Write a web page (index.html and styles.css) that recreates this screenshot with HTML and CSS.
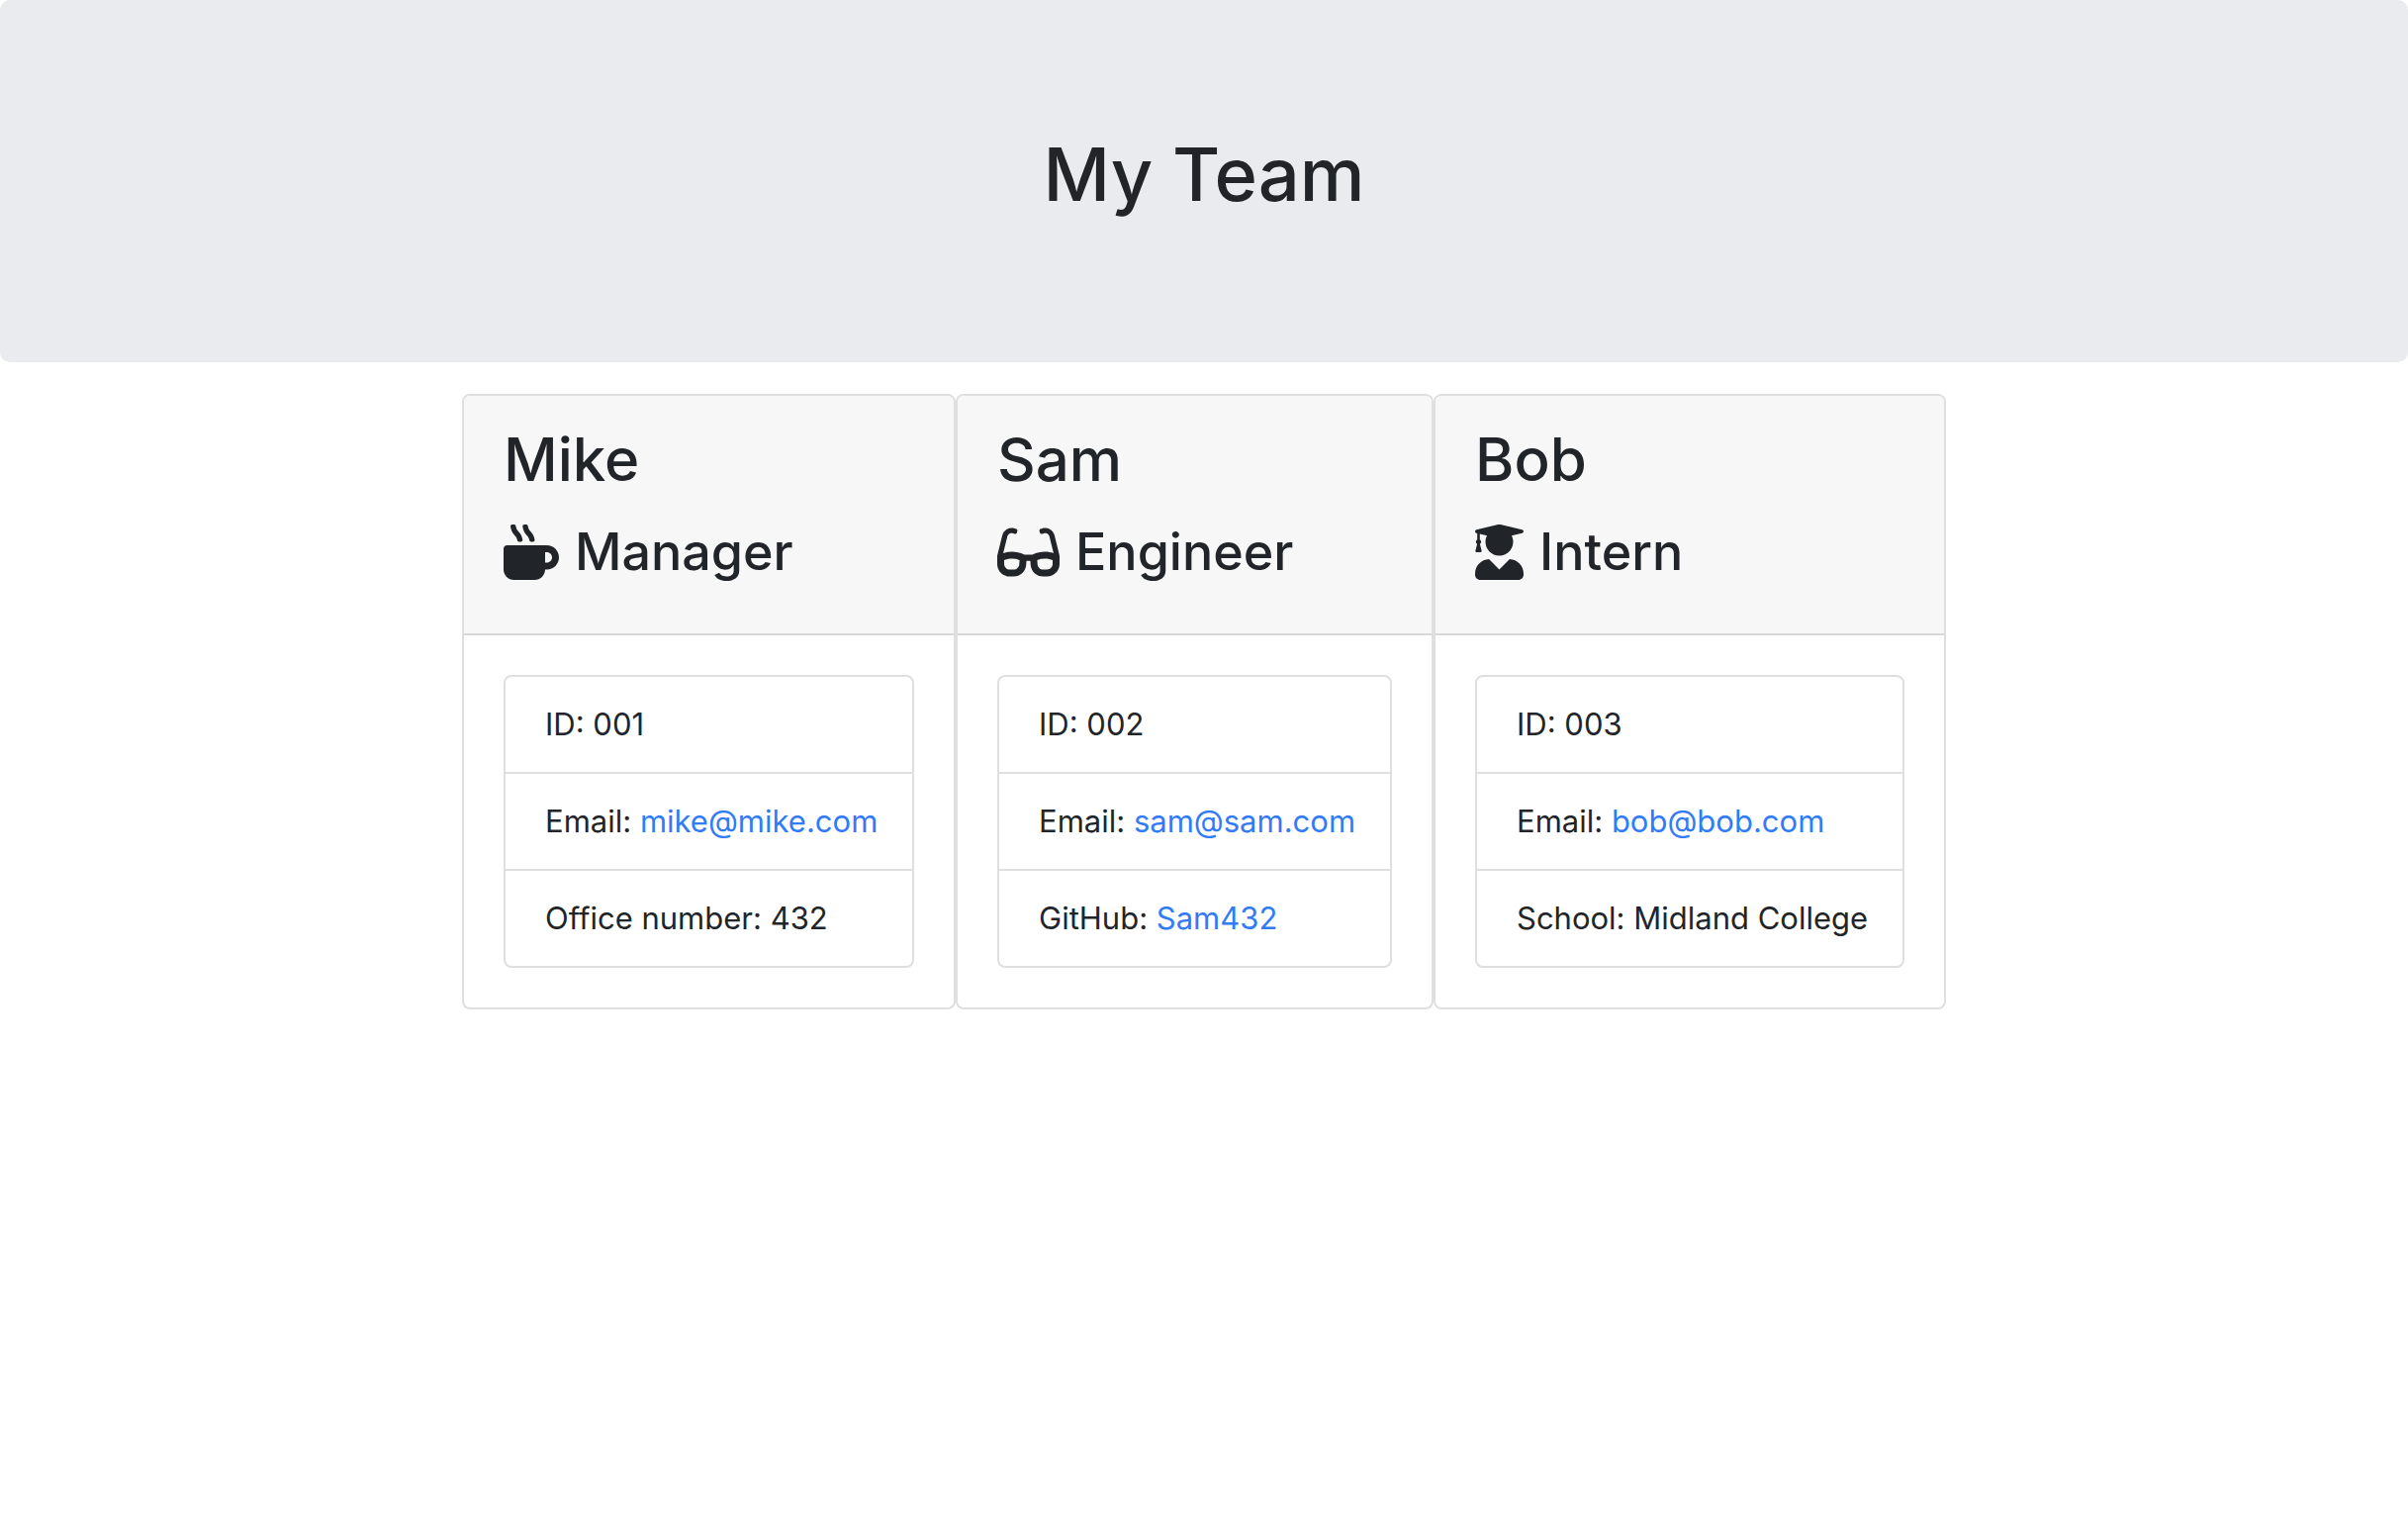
FILE: index.html
```html
<!DOCTYPE html>
<html lang="en">
<head>
  <meta charset="utf-8">
  <meta name="viewport" content="width=device-width, initial-scale=1">
  <title>My Team</title>
  <link rel="stylesheet" href="styles.css">
</head>
<body>
  <header class="banner">
    <h1 class="banner-title">My Team</h1>
  </header>
  <main class="team">
    <article class="card">
      <div class="card-header">
        <h2 class="name">Mike</h2>
        <h3 class="role">
          <svg class="icon" viewBox="0 0 512 512" aria-hidden="true"><path d="M127.1 146.5c1.3 7.7 8 13.5 16 13.5h16.5c9.8 0 17.6-8.5 16.3-18-3.8-28.2-16.4-54.2-36.6-74.7-14.4-14.7-23.6-33.3-26.4-53.5C111.8 5.9 105 0 96.8 0H80.4C70.6 0 63 8.5 64.1 18c3.9 31.9 18 61.3 40.6 84.4 12 12.2 19.7 27.5 22.4 44.1zm112 0c1.3 7.7 8 13.5 16 13.5h16.5c9.8 0 17.6-8.5 16.3-18-3.8-28.2-16.4-54.2-36.6-74.7-14.4-14.7-23.6-33.3-26.4-53.5C223.8 5.9 217 0 208.8 0h-16.4c-9.8 0-17.5 8.5-16.3 18 3.9 31.9 18 61.3 40.6 84.4 12 12.2 19.7 27.5 22.4 44.1zM400 192H32c-17.7 0-32 14.3-32 32v192c0 53 43 96 96 96h192c53 0 96-43 96-96h16c61.8 0 112-50.2 112-112s-50.2-112-112-112zm0 160h-16v-96h16c26.5 0 48 21.5 48 48s-21.5 48-48 48z"/></svg>
          <span>Manager</span>
        </h3>
      </div>
      <div class="card-body">
        <ul class="details">
          <li>ID: 001</li>
          <li>Email: <a href="mailto:mike@mike.com">mike@mike.com</a></li>
          <li>Office number: 432</li>
        </ul>
      </div>
    </article>
    <article class="card">
      <div class="card-header">
        <h2 class="name">Sam</h2>
        <h3 class="role">
          <svg class="icon" viewBox="0 0 576 512" aria-hidden="true"><path d="M574.1 280.37L528.75 98.66c-5.91-23.7-21.59-44.05-43-55.81-21.44-11.73-46.97-14.11-70.19-6.33l-15.25 5.08c-8.39 2.79-12.92 11.86-10.12 20.24l5.06 15.18c2.79 8.38 11.85 12.91 20.23 10.12l13.18-4.39c10.87-3.62 23-3.57 33.16 1.73 10.29 5.37 17.57 14.56 20.37 25.82l38.46 153.82c-22.19-6.81-49.79-12.46-81.2-12.46-34.77 0-73.98 7.02-114.85 26.74h-73.18c-40.87-19.74-80.08-26.75-114.86-26.75-31.42 0-59.02 5.65-81.21 12.46l38.46-153.83c2.79-11.25 10.09-20.45 20.38-25.81 10.16-5.3 22.28-5.35 33.15-1.73l13.17 4.39c8.38 2.79 17.44-1.74 20.23-10.12l5.06-15.18c2.8-8.38-1.73-17.45-10.12-20.24l-15.25-5.08c-23.22-7.78-48.75-5.41-70.19 6.33-21.41 11.77-37.09 32.11-43 55.8L1.9 280.37A64.218 64.218 0 0 0 0 295.86v70.25C0 429.01 51.58 480 115.2 480h37.12c60.28 0 110.37-45.94 114.88-105.37l2.93-38.63h35.75l2.93 38.63C313.31 434.06 363.4 480 423.68 480h37.12c63.62 0 115.2-50.99 115.2-113.88v-70.25c0-5.23-.64-10.43-1.9-15.5zm-370.72 89.42c-1.97 25.91-24.4 46.21-51.06 46.21H115.2C86.97 416 64 393.62 64 366.11v-37.54c18.12-6.49 43.42-12.92 72.58-12.92 23.86 0 47.26 4.33 69.93 12.92l-3.13 41.22zM512 366.12c0 27.51-22.97 49.88-51.2 49.88h-37.12c-26.67 0-49.1-20.3-51.06-46.21l-3.13-41.22c22.67-8.59 46.08-12.92 69.95-12.92 29.12 0 54.43 6.44 72.55 12.93v37.54z"/></svg>
          <span>Engineer</span>
        </h3>
      </div>
      <div class="card-body">
        <ul class="details">
          <li>ID: 002</li>
          <li>Email: <a href="mailto:sam@sam.com">sam@sam.com</a></li>
          <li>GitHub: <a href="https://github.com/Sam432">Sam432</a></li>
        </ul>
      </div>
    </article>
    <article class="card">
      <div class="card-header">
        <h2 class="name">Bob</h2>
        <h3 class="role">
          <svg class="icon" viewBox="0 0 448 512" aria-hidden="true"><path d="M319.4 320.6L224 416l-95.4-95.4C57.1 323.7 0 382.2 0 454.4v9.6c0 26.5 21.5 48 48 48h352c26.5 0 48-21.5 48-48v-9.6c0-72.2-57.1-130.7-128.6-133.8zM13.6 79.8l6.4 1.5v58.4c-7 4.2-12 11.5-12 20.3 0 8.4 4.6 15.4 11.1 19.7L3.5 242c-1.7 6.9 2.1 14 7.6 14h41.8c5.5 0 9.3-7.1 7.6-14l-15.6-62.3C51.4 175.4 56 168.4 56 160c0-8.8-5-16.1-12-20.3V87.1l66 15.9c-8.6 17.2-14 36.4-14 57 0 70.7 57.3 128 128 128s128-57.3 128-128c0-20.6-5.3-39.8-14-57l96.3-23.2c18.2-4.4 18.2-27.1 0-31.5l-190.4-46c-13-3.1-26.7-3.1-39.7 0L13.6 48.2c-18.1 4.4-18.1 27.2 0 31.6z"/></svg>
          <span>Intern</span>
        </h3>
      </div>
      <div class="card-body">
        <ul class="details">
          <li>ID: 003</li>
          <li>Email: <a href="mailto:bob@bob.com">bob@bob.com</a></li>
          <li>School: Midland College</li>
        </ul>
      </div>
    </article>
  </main>
</body>
</html>
```

FILE: styles.css
```css
*,
*::before,
*::after {
  box-sizing: border-box;
}

body {
  margin: 0;
  background: #fff;
  color: #212529;
  font-family: Inter, "Liberation Sans", sans-serif;
  font-size: 31px;
  line-height: 48px;
}

h1,
h2,
h3,
ul {
  margin: 0;
  padding: 0;
}

h1,
h2,
h3 {
  font-weight: 500;
}

a {
  color: #317bf6;
  text-decoration: none;
}

.banner {
  margin-bottom: 32px;
  padding: 128px 64px 142px;
  border-radius: 10px;
  background: #eaebef;
  text-align: center;
}

.banner-title {
  font-size: 74px;
  line-height: 96px;
}

.team {
  display: grid;
  grid-template-columns: 499fr 483fr 518fr;
  max-width: 1500px;
  margin: 0 auto;
}

.card {
  border: 2px solid #dfdfdf;
  border-radius: 8px;
  overflow: hidden;
}

.card-header {
  padding: 24px 40px 40px;
  border-bottom: 2px solid #d8d8d8;
  background: #f7f7f7;
}

.name {
  margin-bottom: 12px;
  font-size: 60px;
  line-height: 80px;
}

.role {
  display: flex;
  align-items: center;
  gap: 16px;
  font-size: 52px;
  line-height: 84px;
}

.icon {
  flex: none;
  height: 56px;
  fill: currentColor;
}

.card-body {
  padding: 40px;
}

.details {
  border: 2px solid #dfdfdf;
  border-radius: 8px;
  list-style: none;
}

.details li {
  padding: 24px 32px 24px 40px;
  white-space: nowrap;
}

.details li + li {
  border-top: 2px solid #dfdfdf;
}
```
